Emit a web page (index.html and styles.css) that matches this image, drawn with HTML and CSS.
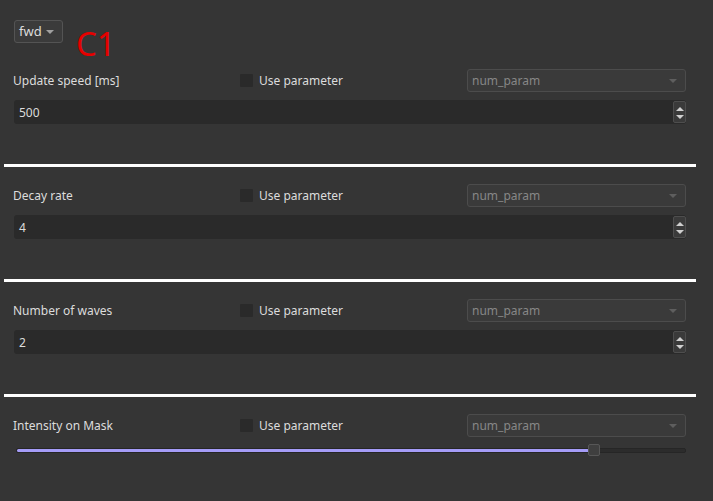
FILE: index.html
```html
<!DOCTYPE html>
<html lang="en">
<head>
    <meta charset="UTF-8">
    <title>Wave settings</title>
    <link rel="stylesheet" href="styles.css">
</head>
<body>
    <div class="panel">
        <div class="top-row">
            <div class="combo small">fwd <span class="arrow"></span></div>
            <span class="tag">C1</span>
        </div>

        <div class="section first">
            <div class="param-row">
                <span class="label">Update speed [ms]</span>
                <label class="check"><span class="box"></span>Use parameter</label>
                <div class="combo disabled">num_param <span class="arrow"></span></div>
            </div>
            <div class="spin">
                <span class="value">500</span>
                <span class="spin-btns"><span class="up"></span><span class="down"></span></span>
            </div>
        </div>
        <div class="divider"></div>

        <div class="section">
            <div class="param-row">
                <span class="label">Decay rate</span>
                <label class="check"><span class="box"></span>Use parameter</label>
                <div class="combo disabled">num_param <span class="arrow"></span></div>
            </div>
            <div class="spin">
                <span class="value">4</span>
                <span class="spin-btns"><span class="up"></span><span class="down"></span></span>
            </div>
        </div>
        <div class="divider"></div>

        <div class="section">
            <div class="param-row">
                <span class="label">Number of waves</span>
                <label class="check"><span class="box"></span>Use parameter</label>
                <div class="combo disabled">num_param <span class="arrow"></span></div>
            </div>
            <div class="spin">
                <span class="value">2</span>
                <span class="spin-btns"><span class="up"></span><span class="down"></span></span>
            </div>
        </div>
        <div class="divider"></div>

        <div class="section">
            <div class="param-row">
                <span class="label">Intensity on Mask</span>
                <label class="check"><span class="box"></span>Use parameter</label>
                <div class="combo disabled">num_param <span class="arrow"></span></div>
            </div>
            <div class="slider">
                <div class="fill" style="width: 572px"></div>
                <div class="handle"></div>
            </div>
        </div>
    </div>
</body>
</html>
```

FILE: styles.css
```css
html, body {
    margin: 0;
    height: 100%;
}

body {
    background-color: #353535;
    color: #dcdcdc;
    font-family: "Noto Sans", "Open Sans", sans-serif;
    font-size: 12px;
}

.panel {
    padding-top: 20px;
}

.top-row {
    position: relative;
    height: 23px;
    padding-left: 14px;
}

.tag {
    position: absolute;
    left: 76px;
    top: 4px;
    color: #e60000;
    font-size: 33px;
    line-height: 40px;
}

.combo {
    position: relative;
    box-sizing: border-box;
    height: 23px;
    line-height: 21px;
    padding-left: 4px;
    background: #3b3b3b;
    border: 1px solid #545454;
    border-radius: 3px;
    color: #dcdcdc;
}
.combo.small {
    width: 49px;
    font-size: 13px;
}
.combo.disabled {
    color: #878787;
    background: #3a3a3a;
    border-color: #4c4c4c;
}
.arrow {
    position: absolute;
    right: 8px;
    top: 9px;
    border-left: 4px solid transparent;
    border-right: 4px solid transparent;
    border-top: 4px solid #a0a0a0;
}
.combo.disabled .arrow {
    border-top-color: #5e5e5e;
}

.section {
    padding: 17px 27px 40px 13px;
}
.section.first {
    padding-top: 26px;
}

.param-row {
    display: grid;
    grid-template-columns: 227px 227px 1fr;
    align-items: center;
    height: 23px;
}

.check {
    display: flex;
    align-items: center;
    gap: 6px;
}
.box {
    width: 13px;
    height: 13px;
    background: #2a2a2a;
    border-radius: 1px;
}

.spin {
    position: relative;
    box-sizing: border-box;
    margin: 8px 0 0 1px;
    height: 24px;
    line-height: 25px;
    padding-left: 5px;
    background: #2a2a2a;
    border-radius: 3px;
}
.spin-btns {
    position: absolute;
    right: 0;
    top: 1px;
    bottom: 1px;
    width: 13px;
    box-sizing: border-box;
    background: #3a3a3a;
    border: 1px solid #4e4e4e;
    border-radius: 2px;
}
.up, .down {
    position: absolute;
    left: 2px;
    border-left: 4px solid transparent;
    border-right: 4px solid transparent;
}
.up {
    top: 5px;
    border-bottom: 4px solid #cfcfcf;
}
.down {
    top: 13px;
    border-top: 4px solid #cfcfcf;
}

.divider {
    height: 3px;
    margin: 0 17px 0 4px;
    background: #ffffff;
}

.slider {
    position: relative;
    margin: 11px 0 0 3px;
    height: 3px;
    background: #2c2c2c;
    border: 1px solid #262626;
    border-radius: 2px;
}
.fill {
    height: 3px;
    background: #a59cf7;
    border-radius: 2px;
}
.handle {
    position: absolute;
    left: 571px;
    top: -5px;
    width: 10px;
    height: 10px;
    background: #3f3f3f;
    border: 1px solid #575757;
    border-radius: 2px;
}
```
